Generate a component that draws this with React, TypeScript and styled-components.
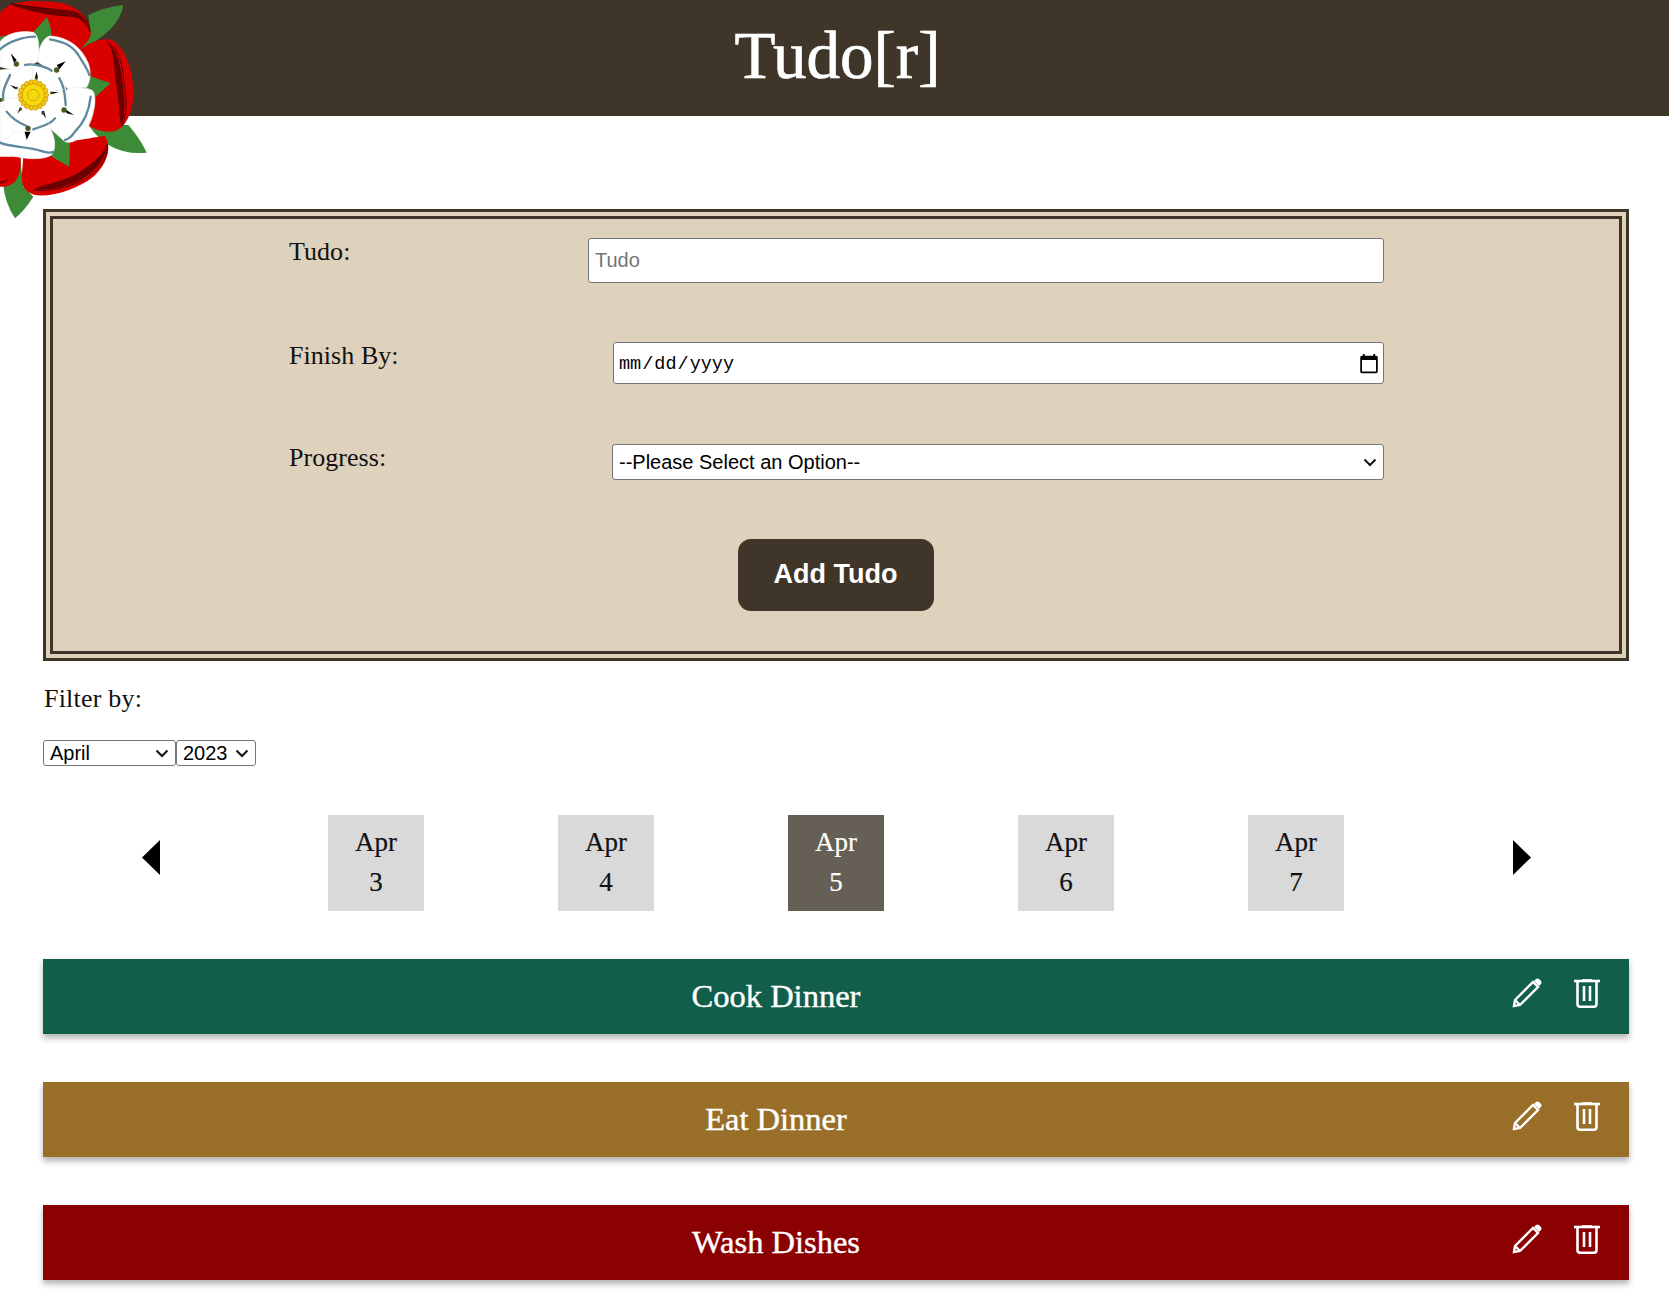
import React from "react";
import styled, { createGlobalStyle } from "styled-components";

const chevron = `url("data:image/svg+xml,%3Csvg xmlns='http://www.w3.org/2000/svg' width='14' height='9' viewBox='0 0 14 9'%3E%3Cpath d='M1.500 1.500L7 7l5.500-5.500' fill='none' stroke='%23111' stroke-width='2'/%3E%3C/svg%3E")`;

const Global = createGlobalStyle`
  html, body { margin: 0; padding: 0; background: #fff; }
  body { font-family: "Liberation Serif", serif; color: #111; }
`;

const Page = styled.div`
  position: relative;
  height: 1303px;
  overflow: hidden;
`;
const Header = styled.header`
  height: 116px;
  box-sizing: border-box;
  padding: 0 0 5px 6px;
  background: #3f3629;
  display: flex;
  align-items: center;
  justify-content: center;
`;
const Title = styled.h1`
  margin: 0;
  color: #fff;
  font: 400 67px/1 "Liberation Serif", serif;
  -webkit-text-stroke: 0.7px #fff;
`;
const Rose = styled.svg`
  position: absolute;
  left: 0;
  top: 0;
  width: 180px;
  height: 230px;
`;
const Main = styled.main`
  padding: 93px 40px 0 43px;
`;
const FormBox = styled.form`
  border: 10px double #3f3629;
  background: #dfd2bc;
  height: 452px;
  box-sizing: border-box;
  padding: 19px 235px 0 236px;
  display: flex;
  flex-direction: column;
`;
const Field = styled.div<{ $h: number }>`
  display: flex;
  justify-content: space-between;
  align-items: flex-start;
  height: ${(p) => p.$h}px;
`;
const Label = styled.label`
  font-size: 26px;
  line-height: 30px;
  letter-spacing: 0.05px;
  margin-top: -1px;
`;
const TextInput = styled.input<{ $w: number; $h: number }>`
  width: ${(p) => p.$w}px;
  height: ${(p) => p.$h}px;
  box-sizing: border-box;
  border: 1px solid #767676;
  border-radius: 3px;
  background: #fff;
  padding: 0 6px;
  font: 20px "Liberation Sans", sans-serif;
  &::placeholder { color: #757575; }
`;
const DateInput = styled(TextInput)`
  font-family: "Liberation Mono", monospace;
  font-size: 18.500px;
  padding: 2px 6px 0 4px;
  &::-webkit-calendar-picker-indicator {
    width: 22px;
    height: 22px;
    padding: 0;
    margin-right: -3px;
  }
`;
const Select = styled.select<{ $w: number; $h: number }>`
  appearance: none;
  width: ${(p) => p.$w}px;
  height: ${(p) => p.$h}px;
  box-sizing: border-box;
  border: 1px solid #767676;
  border-radius: 3px;
  background: #fff ${chevron} no-repeat right 6px center;
  padding: 0 0 0 6px;
  color: #000;
  font: 20px "Liberation Sans", sans-serif;
`;
const ButtonRow = styled.div`
  display: flex;
  justify-content: center;
  padding-right: 2px;
`;
const AddButton = styled.button`
  width: 196px;
  height: 72px;
  border: none;
  border-radius: 13px;
  padding: 0 0 2px;
  background: #3f3629;
  color: #fff;
  font: 700 27px "Liberation Sans", sans-serif;
`;
const FilterLabel = styled.p`
  margin: 23px 0 0 1px;
  font-size: 26px;
  line-height: 30px;
  letter-spacing: 0.2px;
`;
const FilterRow = styled.div`
  display: flex;
  margin-top: 26px;
`;
const DateRow = styled.div`
  display: flex;
  justify-content: space-around;
  align-items: flex-start;
  margin-top: 49px;
`;
const Arrow = styled.button<{ $side: "left" | "right" }>`
  width: 84px;
  height: 96px;
  border: none;
  background: none;
  padding: 0;
  display: flex;
  align-items: center;
  justify-content: center;
  svg {
    width: 18px;
    height: 35px;
    margin-top: -11px;
    margin-left: ${(p) => (p.$side === "left" ? "-3px" : "3px")};
    display: block;
  }
`;
const DateCard = styled.div<{ $active?: boolean }>`
  width: 96px;
  height: 96px;
  box-sizing: border-box;
  padding-bottom: 2px;
  background: ${(p) => (p.$active ? "#665f55" : "#d9d9d9")};
  color: ${(p) => (p.$active ? "#fff" : "#111")};
  display: flex;
  flex-direction: column;
  align-items: center;
  justify-content: center;
  font-size: 27px;
  line-height: 40px;
  -webkit-text-stroke: 0.2px currentColor;
`;
const TodoList = styled.div`
  margin-top: 48px;
  display: flex;
  flex-direction: column;
  gap: 48px;
`;
const Todo = styled.div<{ $color: string }>`
  height: 75px;
  background: ${(p) => p.$color};
  box-shadow: 0 4px 6px rgba(0, 0, 0, 0.3);
  display: flex;
  color: #fff;
`;
const TodoTitle = styled.div`
  flex: 1;
  text-align: center;
  font-size: 32.500px;
  line-height: 75px;
  -webkit-text-stroke: 0.4px #fff;
`;
const TodoActions = styled.div`
  width: 120px;
  display: flex;
  gap: 32px;
  padding: 19px 0 0 3px;
  box-sizing: border-box;
  svg { display: block; }
`;

const Pencil = () => (
  <svg width="30" height="30" viewBox="0 0 30 30" fill="none" stroke="#fff" strokeWidth="2.4">
    <path d="M2 28l1-6L21 4l5 5L8 27z" />
    <path d="M22 3l2-2c1-.7 2-.7 3 0l2 2c.7 1 .7 2 0 3l-2 2z" fill="#fff" stroke="none" />
    <path d="M3 22l5 5" />
  </svg>
);
const Trash = () => (
  <svg width="26" height="30" viewBox="0 0 26 30" fill="none" stroke="#fff" strokeWidth="2.6">
    <path d="M0 3h26" />
    <path d="M3.500 3v23c0 1.500 1 2.700 2.500 2.700h14c1.500 0 2.500-1.200 2.500-2.700V3" />
    <path d="M10 8v15M16 8v15" />
    <path d="M8 2.500h10" />
  </svg>
);

const beads = Array.from({ length: 18 }, (_, i) => {
  const a = (i / 18) * Math.PI * 2;
  return { x: 100 + 39 * Math.cos(a), y: 285 + 39 * Math.sin(a) };
});

const RoseArt = () => (
  <Rose viewBox="0 0 540 690">
    <g fill="#3d8b37">
      <path d="M240 150L272 100L265 45Q310 22 370 15Q360 90 240 150Z" />
      <path d="M265 375L385 375Q420 415 440 458Q330 470 265 375Z" />
      <path d="M60 470L70 560L100 590Q75 630 45 655Q15 610 10 555Z" />
      <path d="M0 60L20 120L0 130Z" />
    </g>
    <g fill="#d90000">
      <path d="M0 40C20 5 90 -5 190 10C250 28 275 70 272 105C262 130 248 140 235 155L130 120L60 95L0 110Z" />
      <path d="M240 150C270 125 310 110 340 122C380 150 402 220 400 290C395 350 370 395 330 395C300 395 275 385 265 375L200 300Z" />
      <path d="M200 420C240 425 280 410 315 408C335 440 325 490 280 530C230 570 150 592 105 585C75 575 65 560 65 530L70 470Z" />
      <path d="M0 470L62 470C65 510 55 545 30 555C15 562 5 560 0 560Z" />
    </g>
    <g fill="#6a0000">
      <path d="M30 12C80 18 170 30 215 36C250 42 265 70 268 95C258 68 240 52 210 50C150 47 80 35 30 12Z" />
      <path d="M320 128C345 140 362 180 368 250C376 300 376 340 365 378C355 350 358 300 350 260C340 200 345 150 320 128Z" />
      <path d="M320 430C325 465 290 515 240 540C190 565 130 572 100 568C140 550 190 545 240 515C280 490 310 465 320 430Z" />
      <path d="M0 545L30 540L0 552Z" />
    </g>
    <g fill="none" stroke="#1a0000" strokeWidth="2">
      <path d="M30 10C80 20 170 28 215 34C250 40 268 65 270 95" />
      <path d="M322 125C350 140 368 180 372 250C382 300 380 340 367 378" />
      <path d="M322 432C330 468 292 520 242 544C190 568 130 575 100 570" />
    </g>
    <g fill="#3d8b37">
      <path d="M95 100C110 85 130 65 140 50C150 70 155 90 155 110L115 185Z" />
      <path d="M205 265L270 228L332 250L285 292Z" />
      <path d="M150 385L210 425L208 500L155 470Z" />
      <path d="M0 370L25 360L0 392Z" />
    </g>
    <g fill="#fff" stroke="#eeeeee" strokeWidth="2">
      <path d="M0 125C20 100 60 90 100 97C118 105 120 150 112 185L60 215L0 200Z" />
      <path d="M112 185C115 150 125 115 150 108C190 110 240 130 265 190C275 220 270 245 260 262L205 268L150 210Z" />
      <path d="M205 265C230 262 270 262 280 275C292 300 280 350 262 385C240 420 215 432 195 425L150 385L160 320Z" />
      <path d="M0 425L40 400L150 385C165 410 170 445 155 465C130 480 90 478 50 470C25 465 10 445 0 425Z" />
      <path d="M0 210L60 205L40 400L0 425Z" />
      <path d="M65 205C90 190 130 195 165 215C195 235 205 280 200 320C190 355 150 385 105 385C70 385 20 350 5 310C0 270 30 225 65 205Z" />
    </g>
    <g fill="none" stroke="#5f8a9e" strokeWidth="7" strokeLinecap="round">
      <path d="M0 148C25 125 70 110 105 110" />
      <path d="M150 118C190 125 215 135 235 165C250 190 262 205 268 225" />
      <path d="M272 290C268 330 250 370 225 395C215 410 205 418 195 420" />
      <path d="M0 428C30 442 90 440 120 452C135 458 145 460 160 456" />
      <path d="M75 195C90 190 130 195 155 212" />
      <path d="M178 235C195 260 195 290 197 315" />
      <path d="M165 355C150 375 120 380 100 388" />
      <path d="M80 378C60 370 35 355 20 335" />
      <path d="M10 300C5 270 20 250 30 225" />
    </g>
    <g fill="none" stroke="#ddd" strokeWidth="1.500">
      <path d="M100 285L95 175M100 285L205 265M100 285L150 380M100 285L20 360M100 285L0 300" />
    </g>
    <g fill="#000">
      <path d="M32 160L50 180L42 188Z" />
      <path d="M197 184L170 195L178 208Z" />
      <path d="M222 345L196 328L200 340Z" />
      <path d="M80 420L74 395L92 395Z" />
      <path d="M110 215L104 235L114 235Z" />
      <path d="M30 255L50 262L46 268Z" />
      <path d="M176 277L152 275L154 283Z" />
      <path d="M138 355L124 335L132 332Z" />
      <path d="M52 342L66 325L60 322Z" />
    </g>
    <g fill="#46591f">
      <circle cx="49" cy="192" r="8" />
      <circle cx="170" cy="210" r="8" />
      <circle cx="192" cy="330" r="8" />
      <circle cx="84" cy="385" r="8" />
      <circle cx="109" cy="236" r="4" />
      <circle cx="50" cy="264" r="4" />
      <circle cx="154" cy="279" r="4" />
      <circle cx="128" cy="340" r="4" />
      <circle cx="62" cy="328" r="4" />
      <circle cx="2" cy="300" r="6" />
    </g>
    <circle cx="100" cy="285" r="35" fill="#f5d90a" stroke="#c9920d" strokeWidth="2" />
    {beads.map((b, i) => (
      <circle key={i} cx={b.x} cy={b.y} r="7" fill="#f2ca0c" stroke="#c9920d" strokeWidth="2" />
    ))}
    <circle cx="100" cy="285" r="17" fill="none" stroke="#c9a00d" strokeWidth="2.500" />
  </Rose>
);

const dates = [3, 4, 5, 6, 7];

export default function App() {
  return (
    <Page>
      <Global />
      <Header>
        <Title>Tudo[r]</Title>
      </Header>
      <RoseArt />
      <Main>
        <FormBox>
          <Field $h={104}>
            <Label>Tudo:</Label>
            <TextInput $w={796} $h={45} placeholder="Tudo" />
          </Field>
          <Field $h={102}>
            <Label>Finish By:</Label>
            <DateInput $w={771} $h={42} type="date" />
          </Field>
          <Field $h={95}>
            <Label>Progress:</Label>
            <Select $w={772} $h={36} defaultValue="">
              <option value="">--Please Select an Option--</option>
            </Select>
          </Field>
          <ButtonRow>
            <AddButton type="button">Add Tudo</AddButton>
          </ButtonRow>
        </FormBox>
        <FilterLabel>Filter by:</FilterLabel>
        <FilterRow>
          <Select $w={133} $h={26} defaultValue="April">
            <option>April</option>
          </Select>
          <Select $w={80} $h={26} defaultValue="2023">
            <option>2023</option>
          </Select>
        </FilterRow>
        <DateRow>
          <Arrow $side="left" aria-label="Previous">
            <svg viewBox="0 0 18 34" preserveAspectRatio="none"><path d="M18 0V34L0 17Z" fill="#000" /></svg>
          </Arrow>
          {dates.map((d) => (
            <DateCard key={d} $active={d === 5}>
              <span>Apr</span>
              <span>{d}</span>
            </DateCard>
          ))}
          <Arrow $side="right" aria-label="Next">
            <svg viewBox="0 0 18 34" preserveAspectRatio="none"><path d="M0 0V34L18 17Z" fill="#000" /></svg>
          </Arrow>
        </DateRow>
        <TodoList>
          {[
            ["Cook Dinner", "#115e4b"],
            ["Eat Dinner", "#986e28"],
            ["Wash Dishes", "#8b0000"],
          ].map(([t, c]) => (
            <Todo key={t} $color={c}>
              <TodoTitle>{t}</TodoTitle>
              <TodoActions>
                <Pencil />
                <Trash />
              </TodoActions>
            </Todo>
          ))}
        </TodoList>
      </Main>
    </Page>
  );
}
